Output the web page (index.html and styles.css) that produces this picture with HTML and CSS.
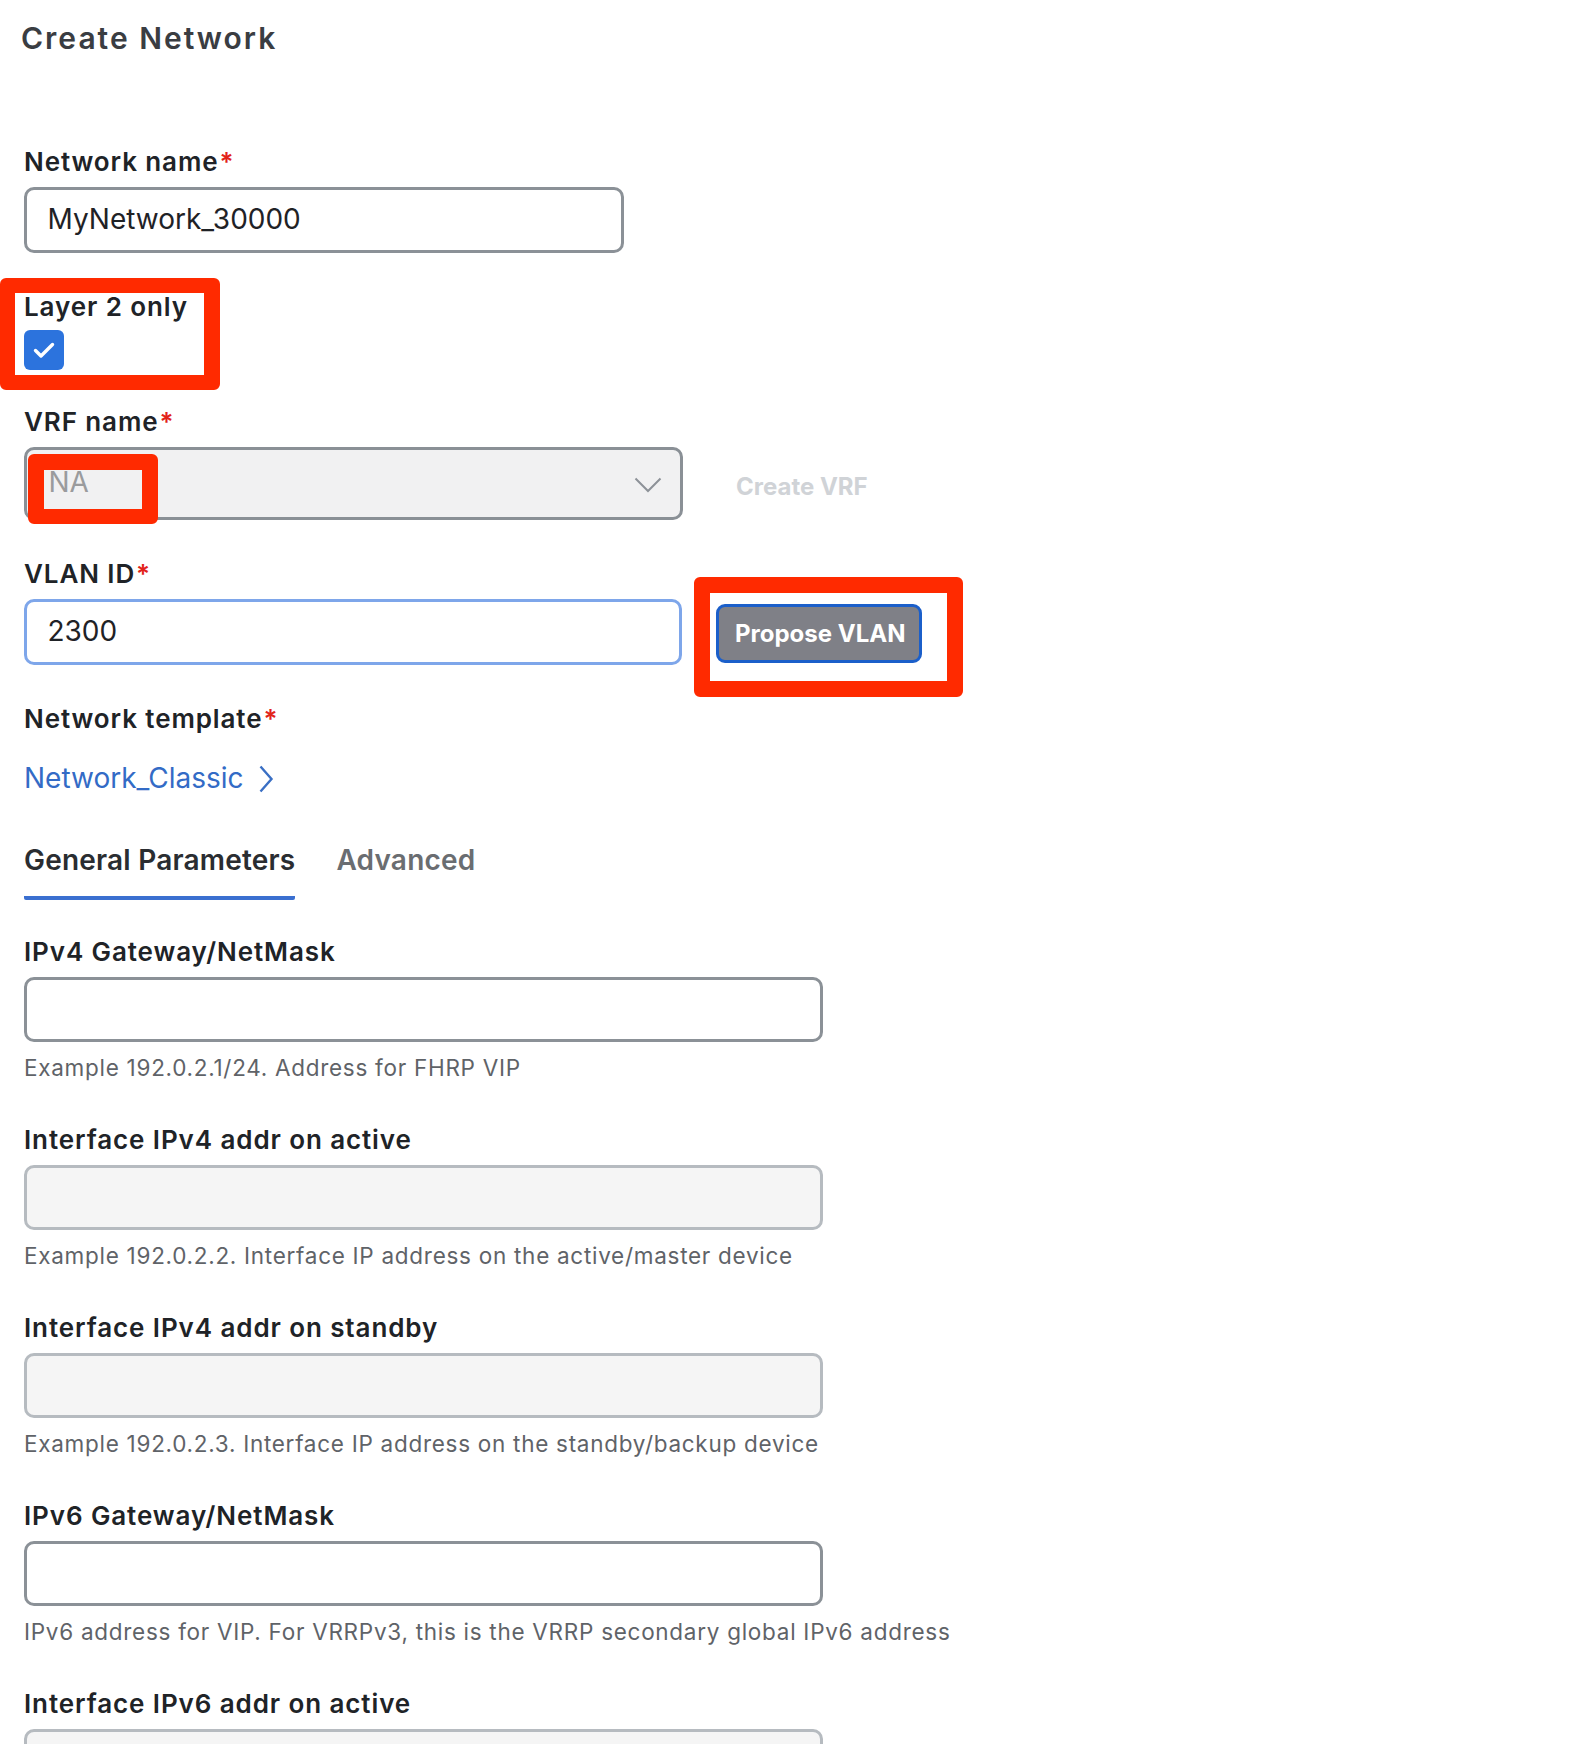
FILE: index.html
```html
<!DOCTYPE html>
<html lang="en">
<head>
<meta charset="utf-8">
<title>Create Network</title>
<link rel="stylesheet" href="styles.css">
</head>
<body>
<main class="page">
  <h1 class="title">Create Network</h1>

  <div class="field field-name">
    <div class="label">Network name<span class="req">*</span></div>
    <div class="input input-name">MyNetwork_30000</div>
  </div>

  <div class="field field-layer2">
    <div class="label">Layer 2 only</div>
    <span class="checkbox">
      <svg width="40" height="40" viewBox="0 0 40 40"><path d="M11.5 20.5 L17 26 L28.5 14.5" fill="none" stroke="#fff" stroke-width="3.4" stroke-linecap="round" stroke-linejoin="round"/></svg>
    </span>
    <span class="annot annot-layer2"></span>
  </div>

  <div class="field field-vrf">
    <div class="label">VRF name<span class="req">*</span></div>
    <div class="row">
      <div class="select">
        <span class="select-value">NA</span>
        <svg class="select-chevron" width="28" height="16" viewBox="0 0 28 16"><path d="M1.5 1.5 L14 14 L26.5 1.5" fill="none" stroke="#8d9298" stroke-width="2"/></svg>
        <span class="annot annot-na"></span>
      </div>
      <button class="btn btn-ghost" type="button">Create VRF</button>
    </div>
  </div>

  <div class="field field-vlan">
    <div class="label">VLAN ID<span class="req">*</span></div>
    <div class="row row-vlan">
      <div class="input input-vlan">2300</div>
      <button class="btn btn-propose" type="button">Propose VLAN</button>
      <span class="annot annot-propose"></span>
    </div>
  </div>

  <div class="field field-template">
    <div class="label">Network template<span class="req">*</span></div>
    <a class="template-link" href="#">Network_Classic
      <svg class="link-chevron" width="16" height="28" viewBox="0 0 16 28"><path d="M2.5 1.5 L13.5 14 L2.5 26.5" fill="none" stroke="#3a6fc4" stroke-width="2.4"/></svg>
    </a>
  </div>

  <div class="tabs">
    <div class="tab tab-active">General Parameters</div>
    <div class="tab">Advanced</div>
  </div>

  <section class="params">
    <div class="param">
      <div class="label">IPv4 Gateway/NetMask</div>
      <div class="input input-wide"></div>
      <div class="help">Example 192.0.2.1/24. Address for FHRP VIP</div>
    </div>
    <div class="param">
      <div class="label">Interface IPv4 addr on active</div>
      <div class="input input-wide input-disabled"></div>
      <div class="help">Example 192.0.2.2. Interface IP address on the active/master device</div>
    </div>
    <div class="param">
      <div class="label">Interface IPv4 addr on standby</div>
      <div class="input input-wide input-disabled"></div>
      <div class="help">Example 192.0.2.3. Interface IP address on the standby/backup device</div>
    </div>
    <div class="param">
      <div class="label">IPv6 Gateway/NetMask</div>
      <div class="input input-wide"></div>
      <div class="help">IPv6 address for VIP. For VRRPv3, this is the VRRP secondary global IPv6 address</div>
    </div>
    <div class="param">
      <div class="label">Interface IPv6 addr on active</div>
      <div class="input input-wide input-disabled"></div>
    </div>
  </section>
</main>
</body>
</html>
```
FILE: styles.css
```css
* { box-sizing: border-box; }

html, body {
  margin: 0;
  padding: 0;
  background: #ffffff;
}

body {
  font-family: "Inter", "Liberation Sans", sans-serif;
  color: #202327;
  overflow: hidden;
  height: 1744px;
}

.page {
  position: relative;
  padding: 20px 0 0 24px;
}

.title {
  margin: 0 0 0 -3px;
  font-size: 30px;
  line-height: 36px;
  font-weight: 600;
  letter-spacing: 2px;
  color: #3a3d42;
}

.field {
  position: relative;
  display: flex;
  flex-direction: column;
  align-items: flex-start;
}

.field-name { margin-top: 91px; }
.field-layer2 { margin-top: 39px; }
.field-vrf { margin-top: 37px; }
.field-vlan { margin-top: 39px; }
.field-template { margin-top: 39px; }

.label {
  font-size: 26px;
  line-height: 30px;
  font-weight: 600;
  letter-spacing: 0.9px;
  color: #202327;
  margin-bottom: 10px;
  white-space: nowrap;
}

.field-layer2 .label { margin-bottom: 8px; }

.req {
  color: #e2231a;
  margin-left: 1px;
}

.input {
  height: 66px;
  border: 3.5px solid #8b9197;
  border-radius: 10px;
  background: #ffffff;
  font-size: 28px;
  line-height: 59px;
  padding: 0 20.5px;
  color: #1f2226;
}

.input-name { width: 600px; }
.input-vlan { width: 658px; border-color: #7ea6ea; }

.checkbox {
  display: block;
  width: 40px;
  height: 40px;
  border-radius: 6px;
  background: #2c73dd;
}

.checkbox svg { display: block; }

.row {
  position: relative;
  display: flex;
  align-items: center;
}

.select {
  position: relative;
  width: 659px;
  height: 73px;
  border: 3.5px solid #8a9096;
  border-radius: 10px;
  background: #f1f1f2;
  display: flex;
  align-items: center;
  justify-content: space-between;
  padding: 0 18px 0 21.5px;
}

.select-value {
  font-size: 28px;
  color: #9a9b9d;
  margin-top: -4px;
}

.select-chevron { display: block; margin-top: 3px; }

.btn {
  font-family: "Inter", "Liberation Sans", sans-serif;
  font-size: 24px;
  font-weight: 700;
  height: 59px;
  padding: 0 16px;
  border: 3px solid transparent;
  border-radius: 9px;
  margin-left: 34px;
  cursor: pointer;
  white-space: nowrap;
}

.btn-ghost {
  background: transparent;
  color: #d0d3d7;
  margin-top: 6px;
}

.btn-propose {
  background: #7f8087;
  border-color: #1b5fca;
  color: #ffffff;
  width: 206px;
  text-align: left;
  margin-top: 3px;
}

.annot {
  position: absolute;
  border: 16px solid #ff2a00;
  border-radius: 6px;
  pointer-events: none;
}

.annot-layer2 {
  left: -24px;
  top: -14px;
  width: 220px;
  height: 112px;
  border-width: 15px 16px 15px 15px;
}

.annot-na {
  left: 0.5px;
  top: 3.5px;
  width: 130px;
  height: 70px;
  border-width: 16px 16px 15px 16px;
}

.annot-propose {
  left: 670px;
  top: -22px;
  width: 269px;
  height: 120px;
}

.template-link {
  margin-top: 17px;
  display: flex;
  align-items: center;
  gap: 14px;
  font-size: 28px;
  line-height: 34px;
  color: #336bc6;
  text-decoration: none;
}

.link-chevron { display: block; margin-top: 2px; }

.tabs {
  display: flex;
  gap: 41px;
  margin-top: 48px;
}

.tab {
  font-size: 28px;
  line-height: 34px;
  font-weight: 600;
  color: #6a6d71;
  padding-bottom: 19px;
  border-bottom: 4px solid transparent;
  letter-spacing: 0.2px;
}

.tab-active {
  color: #2a2d31;
  border-bottom-color: #3a6fd0;
  border-radius: 0 0 2px 2px;
}

.params {
  margin-top: 37px;
  display: flex;
  flex-direction: column;
  gap: 43px;
}

.param {
  display: flex;
  flex-direction: column;
  align-items: flex-start;
}

.input-wide {
  width: 799px;
  height: 65px;
}

.input-disabled {
  background: #f5f5f5;
  border-color: #b6bbc0;
}

.help {
  margin-top: 12px;
  font-size: 22.5px;
  line-height: 28px;
  color: #5f6368;
  white-space: nowrap;
  letter-spacing: 0.72px;
}
```
